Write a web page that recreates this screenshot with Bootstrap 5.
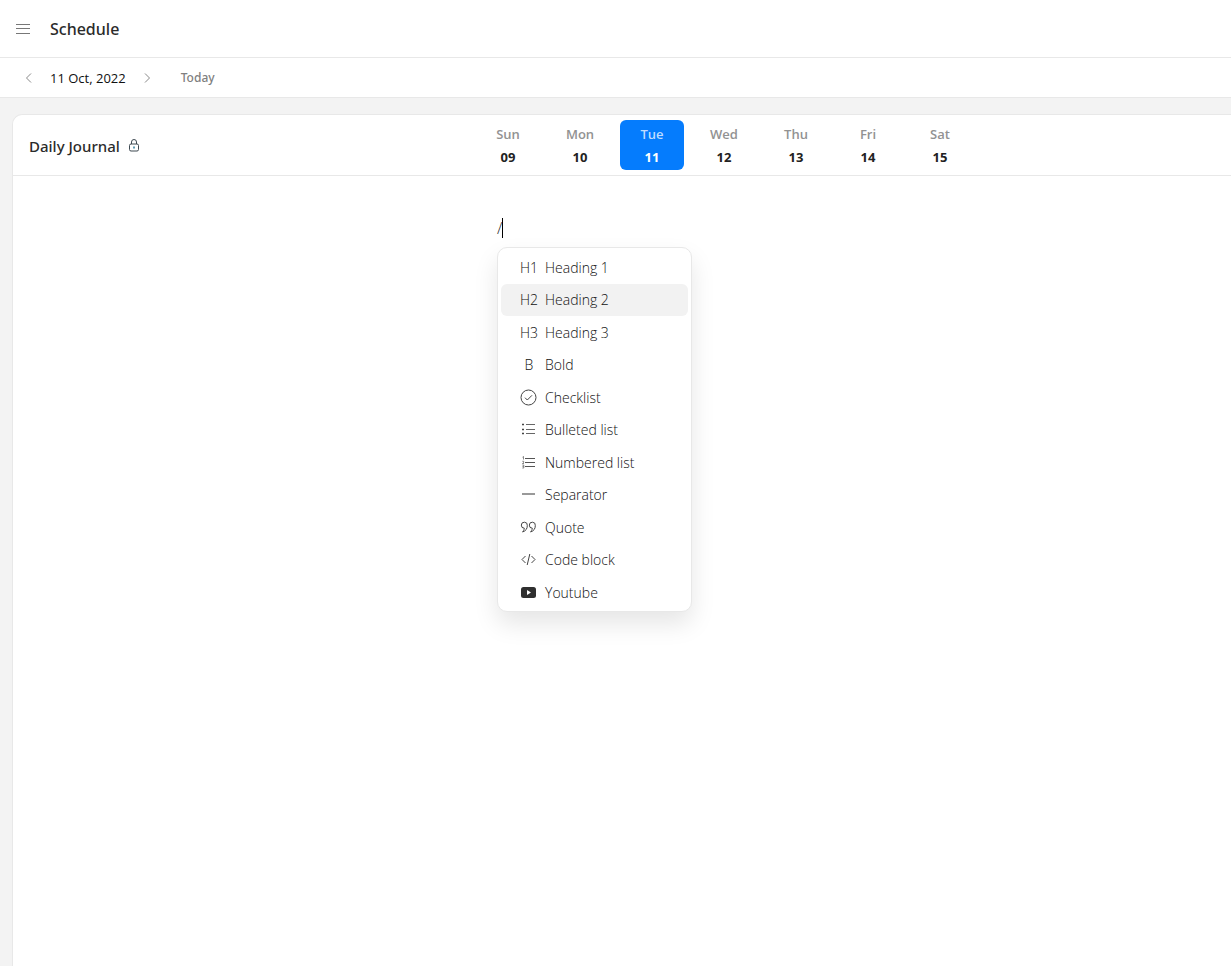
<!DOCTYPE html>
<html lang="en">
<head>
<meta charset="utf-8">
<meta name="viewport" content="width=device-width, initial-scale=1">
<title>Schedule</title>
<link href="https://cdn.jsdelivr.net/npm/bootstrap@5.3.0/dist/css/bootstrap.min.css" rel="stylesheet">
<style>
  :root { --ink: #2b2b2b; --line: #e8e8e8; --soft: #f3f3f3; --accent: #057cfd; }
  body { font-family: "Open Sans", "Noto Sans", sans-serif; font-size: 14px; line-height: 22px; color: var(--ink); background: var(--soft); }
  svg { display: block; }
  button { color: inherit; }
  .plain-btn { border: 0; padding: 0; background: none; }
  .line-b { border-bottom: 1px solid var(--line); }
  .app-bar { height: 58px; padding-left: 16px; gap: 20px; }
  .app-title, .journal-name { font-family: "Noto Sans", "Open Sans", sans-serif; font-size: 16px; line-height: 24px; font-weight: 500; }
  .journal-name { font-size: 15px; }
  .date-bar { height: 40px; padding-left: 24px; }
  .date-now { font-size: 13px; font-weight: 500; color: #111; margin: 0 16px; }
  .today-btn { font-family: "Noto Sans", "Open Sans", sans-serif; font-size: 12px; font-weight: 500; color: #808080; margin-left: 29px; }
  .journal { margin: 16px 0 0 12px; border: 1px solid var(--line); border-width: 1px 0 0 1px; border-top-left-radius: 10px; }
  .journal-head { height: 61px; }
  .journal-title { width: 463px; padding: 2px 0 0 16px; gap: 9px; }
  .day-btn { width: 64px; height: 50px; padding-top: 2px; border-radius: 6px; font-size: 13px; line-height: 23px; font-weight: 600; color: #929292; }
  .day-btn b { display: block; font-weight: 700; color: #222; }
  .day-btn.active { background: var(--accent); color: #bfdcff; }
  .day-btn.active b { color: #fff; }
  .editor { padding: 42px 16px 42px 484px; }
  .editor-line { width: 100%; font-size: 16px; line-height: 20px; font-weight: 300; }
  .caret { width: 1px; height: 20px; background: #000; }
  .slash-menu { top: 100%; left: 0; margin-top: 9px; width: 195px; min-height: 365px; padding: 3px; border: 1px solid var(--line); border-radius: 10px; box-shadow: 0 12px 24px rgba(0,0,0,.1); }
  .menu-btn { height: 32px; padding: 1px 0 0 19px; gap: 7px; border-radius: 6px; font-size: 14px; font-weight: 300; color: #111; }
  .menu-btn.active { background: #f2f2f2; }
  .glyph { width: 18px; flex: none; }
</style>
</head>
<body>
<div class="d-flex flex-column min-vh-100">
  <header class="app-bar bg-white line-b d-flex align-items-center">
    <button class="plain-btn" type="button" aria-label="Menu">
      <svg width="14" height="14" viewBox="0 0 14 14" stroke="#777"><path d="M0 2.5h14M0 6.5h14M0 11.5h14"/></svg>
    </button>
    <h1 class="app-title mb-0">Schedule</h1>
  </header>

  <div class="date-bar bg-white line-b d-flex align-items-center">
    <button class="plain-btn" type="button" aria-label="Previous day">
      <svg width="10" height="10" viewBox="0 0 10 10" fill="none" stroke="#888"><path d="M7 .5 2.500 5 7 9.500"/></svg>
    </button>
    <span class="date-now">11 Oct, 2022</span>
    <button class="plain-btn" type="button" aria-label="Next day">
      <svg width="10" height="10" viewBox="0 0 10 10" fill="none" stroke="#888"><path d="M3 .5 7.500 5 3 9.500"/></svg>
    </button>
    <button class="plain-btn today-btn" type="button">Today</button>
  </div>

  <main class="journal bg-white flex-grow-1">
    <div class="journal-head line-b d-flex align-items-center">
      <div class="journal-title d-flex align-items-center flex-shrink-0">
        <h2 class="journal-name mb-0">Daily Journal</h2>
        <svg width="10" height="14" viewBox="0 0 10 14" fill="none" stroke="#3f4a52"><rect x=".5" y="5" width="9" height="7" rx="1.500"/><path d="M2.500 5V3a2.500 2.500 0 0 1 5 0v2"/><path d="M5 7.500v2" stroke="#2d7d9c" stroke-width="1.500"/></svg>
      </div>
      <nav class="d-flex gap-2" aria-label="Week">
        <button class="plain-btn day-btn" type="button">Sun<b>09</b></button>
        <button class="plain-btn day-btn" type="button">Mon<b>10</b></button>
        <button class="plain-btn day-btn active" type="button">Tue<b>11</b></button>
        <button class="plain-btn day-btn" type="button">Wed<b>12</b></button>
        <button class="plain-btn day-btn" type="button">Thu<b>13</b></button>
        <button class="plain-btn day-btn" type="button">Fri<b>14</b></button>
        <button class="plain-btn day-btn" type="button">Sat<b>15</b></button>
      </nav>
    </div>

    <div class="editor">
      <div class="editor-line position-relative d-flex align-items-center">
        <span>/</span><span class="caret"></span>
        <div class="slash-menu position-absolute bg-white d-flex flex-column justify-content-between">
          <button class="plain-btn menu-btn d-flex align-items-center" type="button"><span class="glyph">H1</span>Heading 1</button>
          <button class="plain-btn menu-btn d-flex align-items-center active" type="button"><span class="glyph">H2</span>Heading 2</button>
          <button class="plain-btn menu-btn d-flex align-items-center" type="button"><span class="glyph">H3</span>Heading 3</button>
          <button class="plain-btn menu-btn d-flex align-items-center" type="button"><span class="glyph">B</span>Bold</button>
          <button class="plain-btn menu-btn d-flex align-items-center" type="button">
            <svg class="glyph" width="18" height="18" viewBox="0 0 18 18" fill="none" stroke="#444"><circle cx="8.500" cy="8.500" r="7.500"/><path d="m5 8.700 2.300 2.300 4.700-4.700"/></svg>Checklist</button>
          <button class="plain-btn menu-btn d-flex align-items-center" type="button">
            <svg class="glyph" width="18" height="18" viewBox="0 0 18 18" stroke="#666"><path d="M6 3.500h9M6 8.500h9M6 12.500h9"/><path d="M2 3.500h2M2 8.500h2M2 12.500h2" stroke="#444" stroke-width="1.500"/></svg>Bulleted list</button>
          <button class="plain-btn menu-btn d-flex align-items-center" type="button">
            <svg class="glyph" width="18" height="18" viewBox="0 0 18 18" fill="none" stroke="#555"><path d="M5 4.500h10M5 8.500h10M5 12.500h10"/><path d="M2.500 3.200l1-.7v3M2.300 7.300h1.400v1L2.500 9.500h1.500M2.300 11h1.500v3H2.300M2.500 12.500h1.200" stroke-width=".7"/></svg>Numbered list</button>
          <button class="plain-btn menu-btn d-flex align-items-center" type="button">
            <svg class="glyph" width="18" height="18" viewBox="0 0 18 18" stroke="#999" stroke-width="2"><path d="M2 8h13"/></svg>Separator</button>
          <button class="plain-btn menu-btn d-flex align-items-center" type="button">
            <svg class="glyph" width="18" height="18" viewBox="0 0 18 18" fill="none" stroke="#444"><path d="M4.300 9.200A3 3 0 1 1 7.300 6.500c.1 3-1.400 5.500-4.800 6.500 1-.9 1.600-2 1.800-3.800zM12.300 9.200A3 3 0 1 1 15.300 6.500c.1 3-1.400 5.500-4.800 6.500 1-.9 1.600-2 1.800-3.800z"/></svg>Quote</button>
          <button class="plain-btn menu-btn d-flex align-items-center" type="button">
            <svg class="glyph" width="18" height="18" viewBox="0 0 18 18" fill="none" stroke="#444"><path d="M5.500 5 2 8.500 5.500 12M11.500 5 15 8.500 11.500 12M9.800 3 7.200 14"/></svg>Code block</button>
          <button class="plain-btn menu-btn d-flex align-items-center" type="button">
            <svg class="glyph" width="18" height="18" viewBox="0 0 18 18"><rect x="1" y="3" width="15" height="11" rx="2.500" fill="#2f2f2f"/><path d="m7 6 4 2.500L7 11z" fill="#fff"/></svg>Youtube</button>
        </div>
      </div>
    </div>
  </main>
</div>
<script src="https://cdn.jsdelivr.net/npm/bootstrap@5.3.0/dist/js/bootstrap.bundle.min.js"></script>
</body>
</html>
